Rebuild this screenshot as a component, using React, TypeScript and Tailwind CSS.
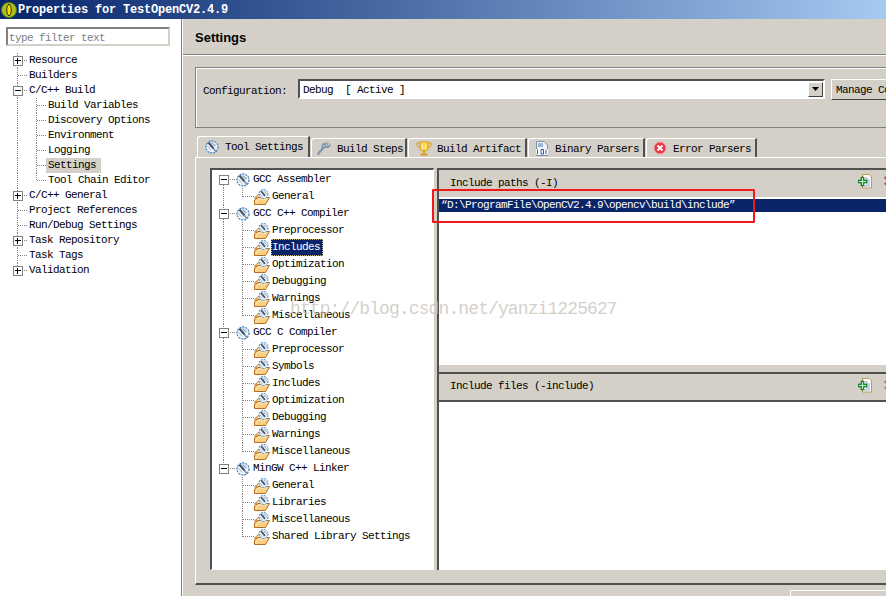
import React from "react";

const ToolIcon = ({ size = 14 }: { size?: number }) => (
  <svg width={size} height={size} viewBox="0 0 14 14" className="shrink-0">
    <circle cx="7" cy="7" r="6" fill="#f2f6fb" stroke="#3f86c4" strokeWidth="1.3" strokeDasharray="2 1" />
    <path d="M3.5 2.5 L8.5 8.5" stroke="#44566e" strokeWidth="2.2" />
    <path d="M8 8 L11 11.5" stroke="#7f8ba0" strokeWidth="1.6" />
    <path d="M6.5 2.5 L10.5 6" stroke="#8fa0b8" strokeWidth="1.2" />
    <path d="M2.5 6 L6 10.5" stroke="#a6b4c8" strokeWidth="1" />
  </svg>
);

const FolderIcon = () => (
  <svg width="16" height="16" viewBox="0 0 16 16" className="shrink-0">
    <path d="M.5 9 L4.5 5.5 L8 5.5 L8 9 Z" fill="#fde4ad" stroke="#b9772a" />
    <path d="M.5 15.5 L.5 11 L4 8.5 L15.5 8.5 L11.5 15.5 Z" fill="#fbcf80" stroke="#b36f22" />
    <path d="M1.5 14 L4.5 10 L13 10" fill="none" stroke="#fdeac2" />
    <circle cx="9.5" cy="5" r="4.5" fill="#f2f6fb" stroke="#3f86c4" strokeDasharray="2 1" />
    <path d="M7 2 L11 6.8" stroke="#44566e" strokeWidth="1.8" />
    <path d="M9.5 1.8 L12.8 4.8" stroke="#8fa0b8" />
    <path d="M6 5 L9 8.5" stroke="#a6b4c8" />
  </svg>
);

const Expander = ({ x, y, open }: { x: number; y: number; open: boolean }) => (
  <g shapeRendering="crispEdges">
    <rect x={x - 4.5} y={y - 4.5} width="9" height="9" fill="#fff" stroke="#808080" />
    <path d={`M${x - 2.5} ${y}H${x + 3}`} stroke="#000" />
    {!open && <path d={`M${x} ${y - 2.5}V${y + 3}`} stroke="#000" />}
  </g>
);

type SideRow = { t: string; lvl: 0 | 1; exp?: "open" | "closed"; last?: boolean; sel?: boolean };

const side: SideRow[] = [
  { t: "Resource", lvl: 0, exp: "closed" },
  { t: "Builders", lvl: 0 },
  { t: "C/C++ Build", lvl: 0, exp: "open" },
  { t: "Build Variables", lvl: 1 },
  { t: "Discovery Options", lvl: 1 },
  { t: "Environment", lvl: 1 },
  { t: "Logging", lvl: 1 },
  { t: "Settings", lvl: 1, sel: true },
  { t: "Tool Chain Editor", lvl: 1, last: true },
  { t: "C/C++ General", lvl: 0, exp: "closed" },
  { t: "Project References", lvl: 0 },
  { t: "Run/Debug Settings", lvl: 0 },
  { t: "Task Repository", lvl: 0, exp: "closed" },
  { t: "Task Tags", lvl: 0 },
  { t: "Validation", lvl: 0, exp: "closed", last: true },
];

const SideItem = ({ r }: { r: SideRow }) => {
  const w = r.lvl === 0 ? 28 : 46;
  return (
    <div className="flex h-[15px] items-center">
      <svg width={w} height="15" className="shrink-0">
        <g stroke="#808080" strokeDasharray="1 1" fill="none" shapeRendering="crispEdges">
          {r.lvl === 0 ? (
            <>
              <path d={`M17.5 0V${r.last ? 7.5 : 15}`} />
              <path d="M18 7.5H28" />
            </>
          ) : (
            <>
              <path d="M17.5 0V15" />
              <path d={`M36.5 0V${r.last ? 7.5 : 15}`} />
              <path d="M37 7.5H46" />
            </>
          )}
        </g>
        {r.exp && <Expander x={17.5} y={7.5} open={r.exp === "open"} />}
      </svg>
      <span
        className={`h-[15px] leading-[15px] whitespace-nowrap ${r.lvl === 0 ? "px-[1px]" : "px-[2px]"} ${
          r.sel ? "bg-[#d4d0c8] pr-[5px]" : ""
        }`}
      >
        {r.t}
      </span>
    </div>
  );
};

type ToolRow = { t: string; lvl: 0 | 1; last?: boolean; sel?: boolean };

const tools: ToolRow[] = [
  { t: "GCC Assembler", lvl: 0 },
  { t: "General", lvl: 1, last: true },
  { t: "GCC C++ Compiler", lvl: 0 },
  { t: "Preprocessor", lvl: 1 },
  { t: "Includes", lvl: 1, sel: true },
  { t: "Optimization", lvl: 1 },
  { t: "Debugging", lvl: 1 },
  { t: "Warnings", lvl: 1 },
  { t: "Miscellaneous", lvl: 1, last: true },
  { t: "GCC C Compiler", lvl: 0 },
  { t: "Preprocessor", lvl: 1 },
  { t: "Symbols", lvl: 1 },
  { t: "Includes", lvl: 1 },
  { t: "Optimization", lvl: 1 },
  { t: "Debugging", lvl: 1 },
  { t: "Warnings", lvl: 1 },
  { t: "Miscellaneous", lvl: 1, last: true },
  { t: "MinGW C++ Linker", lvl: 0 },
  { t: "General", lvl: 1 },
  { t: "Libraries", lvl: 1 },
  { t: "Miscellaneous", lvl: 1 },
  { t: "Shared Library Settings", lvl: 1, last: true },
];

const ToolItem = ({ r, idx }: { r: ToolRow; idx: number }) => {
  const isLastGroup = idx >= 17;
  if (r.lvl === 0) {
    return (
      <div className="flex h-[17px] items-center">
        <svg width="24" height="17" className="shrink-0">
          <g stroke="#808080" strokeDasharray="1 1" fill="none" shapeRendering="crispEdges">
            <path d={`M11.5 ${idx === 0 ? 8 : 0}V${isLastGroup ? 8 : 17}`} />
            <path d="M12 8.5H24" />
          </g>
          <Expander x={11.5} y={8.5} open />
        </svg>
        <ToolIcon />
        <span className="ml-[3px] leading-[17px] whitespace-nowrap">{r.t}</span>
      </div>
    );
  }
  return (
    <div className="flex h-[17px] items-center">
      <svg width="42" height="17" className="shrink-0">
        <g stroke="#808080" strokeDasharray="1 1" fill="none" shapeRendering="crispEdges">
          {!isLastGroup && <path d="M11.5 0V17" />}
          <path d={`M30.5 0V${r.last ? 8.5 : 17}`} />
          <path d="M31 8.5H42" />
        </g>
      </svg>
      <FolderIcon />
      <span
        className={`ml-[1px] h-[17px] px-[1px] pr-[3px] leading-[17px] whitespace-nowrap ${
          r.sel ? "bg-[#0a246a] text-white outline-1 -outline-offset-1 outline-dotted outline-[#c8b878]" : ""
        }`}
      >
        {r.t}
      </span>
    </div>
  );
};

const TabIcon = ({ k }: { k: string }) => {
  if (k === "tool") return <ToolIcon />;
  if (k === "steps")
    return (
      <svg width="16" height="15" viewBox="0 0 16 15" className="shrink-0">
        <path d="M1 14 L2 11 L5 8 L6 3 L10 1 L15 4 L13 7 L9 7 L5 11 L3 14 Z" fill="#7f98b0" />
        <path d="M10 2l1 3M13 3l-1 2M7 4l2 2" stroke="#d4d0c8" />
      </svg>
    );
  if (k === "art")
    return (
      <svg width="16" height="15" viewBox="0 0 16 15" className="shrink-0">
        <path d="M4 1H12V7Q12 10 8 10Q4 10 4 7Z" fill="#fbd34d" stroke="#e09a12" />
        <path d="M4 2H1V4Q1 6 4 7M12 2H15V4Q15 6 12 7" fill="none" stroke="#e09a12" />
        <path d="M6.5 2V8M9.5 2V8" stroke="#fff3b8" />
        <path d="M8 10V12M4.5 13.5H11.5" stroke="#e09a12" strokeWidth="2" />
      </svg>
    );
  if (k === "bin")
    return (
      <svg width="14" height="15" viewBox="0 0 14 15" className="shrink-0">
        <path d="M1.5 .5H9L12.5 4V14.5H1.5Z" fill="#eef3fa" stroke="#7d8ea8" />
        <path d="M3 3H8M3 5H8" stroke="#4a76b8" />
        <rect x="1" y="8" width="12" height="5.5" fill="#fff" />
        <path d="M2.5 8.5V13M6 8.5V13M6 8.5H8.5V13H6M11 8.5V13" stroke="#2a5ca8" fill="none" />
      </svg>
    );
  return (
    <svg width="14" height="14" viewBox="0 0 14 14" className="shrink-0">
      <circle cx="7" cy="7" r="6" fill="#e8394a" stroke="#f19aa2" />
      <path d="M4.5 4.5L9.5 9.5M9.5 4.5L4.5 9.5" stroke="#fff" strokeWidth="1.8" />
    </svg>
  );
};

const Tab = ({ k, t, cls, active }: { k: string; t: string; cls: string; active?: boolean }) => (
  <div
    className={`flex items-center border-t border-l border-r-2 border-t-white border-l-white border-r-[#505050] rounded-tl-[3px] ${cls} ${
      active ? "h-[21px]" : "h-[19px]"
    }`}
  >
    <TabIcon k={k} />
    <span className={`whitespace-nowrap ${active ? "" : "pt-[2px]"}`}>{t}</span>
  </div>
);

const AddIcon = () => (
  <svg width="15" height="15" viewBox="0 0 15 15" className="shrink-0">
    <path d="M4.5 .5H11L13.5 3V14H4.5Z" fill="#fff" stroke="#bb9a50" />
    <path d="M7 4H10M7 6H12M8 8H12M8 10H12M6 12H12" stroke="#8fa8cc" />
    <path d="M0 6H3V3H6V6H9V9H6V12H3V9H0Z" fill="#1f9a3c" stroke="#0f6a2a" strokeWidth=".6" />
    <path d="M1 7.5H8M4.5 4V11" stroke="#bfeec8" />
  </svg>
);

const DelIcon = ({ color }: { color: string }) => (
  <svg width="15" height="15" viewBox="0 0 15 15" className="shrink-0">
    <path d="M3 3L11 11M11 3L3 11" stroke={color} strokeWidth="3" strokeDasharray="2 1" />
  </svg>
);

const PathsHeader = ({ t, on, textCls }: { t: string; on?: boolean; textCls?: string }) => (
  <div className="flex h-[28px] items-center justify-between border-t-2 border-[#505050] pl-[11px]">
    <span className={`whitespace-nowrap ${textCls ?? ""}`}>{t}</span>
    <div className="flex items-center gap-[9px] pb-[4px]">
      <AddIcon />
      <DelIcon color={on ? "#d6293a" : "#808080"} />
    </div>
  </div>
);

export default function App() {
  return (
    <div
      className="relative flex h-[596px] w-[886px] flex-col overflow-hidden bg-[#d4d0c8] text-[11px] tracking-[-0.6px] text-black"
      style={{ fontFamily: '"Liberation Mono", monospace' }}
    >
      <div className="flex h-[19px] shrink-0 items-center bg-gradient-to-r from-[#0a246a] to-[#a6caf0] pl-[1px]">
        <svg width="16" height="16" viewBox="0 0 16 16" className="shrink-0">
          <circle cx="8" cy="8" r="7.5" fill="#a8c020" stroke="#5e7a10" />
          <path d="M8 2C5 4 5 12 8 14C11 12 11 4 8 2Z" fill="#ffd900" stroke="#2a2a10" />
        </svg>
        <span className="ml-[1px] text-[12px] font-bold tracking-[-0.2px] whitespace-nowrap text-white">
          Properties for TestOpenCV2.4.9
        </span>
      </div>

      <div className="flex min-h-0 flex-1">
        <aside className="flex w-[181px] shrink-0 flex-col bg-white pt-[8px]">
          <div className="mr-[11px] ml-[6px] flex h-[19px] items-center border-2 border-r-[#d4d0c8] border-b-[#d4d0c8] border-l-[#808080] border-t-[#808080] pl-[1px] pt-[3px] text-[#808080]">
            type filter text
          </div>
          <div className="mt-[7px]">
            {side.map((r) => (
              <SideItem key={r.t} r={r} />
            ))}
          </div>
        </aside>
        <div className="w-[2px] shrink-0 border-r border-white bg-[#808080]" />

        <main className="flex min-w-0 flex-1 flex-col">
          <div
            className="flex h-[36px] shrink-0 items-center border-b border-b-[#808080] pl-[12px] pt-[3px] text-[13px] font-bold tracking-normal shadow-[0_1px_0_#fff]"
            style={{ fontFamily: '"Liberation Sans", sans-serif' }}
          >
            Settings
          </div>

          <div className="ml-[12px] mt-[12px] flex h-[61px] w-[720px] shrink-0 items-start border border-[#808080] pl-[7px] pt-[11px] shadow-[inset_1px_1px_0_#fff]">
            <span className="mt-[4px] w-[95px] shrink-0 whitespace-nowrap">Configuration:</span>
            <div className="flex h-[20px] w-[527px] shrink-0 items-center justify-between border-2 border-t-[#505050] border-l-[#505050] border-r-white border-b-white bg-white pl-[3px]">
              <span className="whitespace-pre pt-[3px]">Debug  [ Active ]</span>
              <div className="flex h-[15px] w-[15px] items-center justify-center border border-t-white border-l-white border-r-[#404040] border-b-[#404040] bg-[#d4d0c8]">
                <svg width="7" height="4"><path d="M0 0H7L3.5 4Z" fill="#000" /></svg>
              </div>
            </div>
            <div className="ml-[6px] flex h-[21px] w-[100px] shrink-0 items-center border border-t-white border-l-white border-r-[#404040] border-b-[#404040] pl-[4px] pt-[1px] whitespace-nowrap">
              Manage Configurations...
            </div>
          </div>

          <div className="ml-[14px] mt-[8px] flex shrink-0 items-end gap-[1px]">
            <Tab k="tool" t="Tool Settings" cls="w-[113px] gap-[6px] pl-[7px]" active />
            <Tab k="steps" t="Build Steps" cls="w-[96px] gap-[5px] pl-[4px]" />
            <Tab k="art" t="Build Artifact" cls="w-[119px] gap-[5px] pl-[7px]" />
            <Tab k="bin" t="Binary Parsers" cls="w-[117px] gap-[6px] pl-[6px]" />
            <Tab k="err" t="Error Parsers" cls="w-[111px] gap-[6px] pl-[6px]" />
          </div>

          <div className="ml-[12px] flex h-[428px] w-[720px] shrink-0 border-t border-l border-b-2 border-t-white border-l-white border-b-[#505050] pt-[10px] pl-[14px]">
            <div className="h-[402px] w-[224px] shrink-0 border-t-2 border-l-2 border-b border-r border-t-[#505050] border-l-[#505050] border-b-white border-r-white bg-white">
              <div className="pt-[1px]">
                {tools.map((r, i) => (
                  <ToolItem key={i} r={r} idx={i} />
                ))}
              </div>
            </div>
            <div className="ml-[3px] flex h-[402px] w-[460px] shrink-0 flex-col border-l-2 border-[#505050]">
              <PathsHeader t="Include paths (-I)" on />
              <div className="h-[169px] shrink-0 border-t border-b border-t-[#d4d0c8] border-b-white bg-white pt-[2px]">
                <div className="flex h-[13px] items-center bg-[#0a246a] pl-[2px] whitespace-nowrap text-white">
                  “D:\ProgramFile\OpenCV2.4.9\opencv\build\include”
                </div>
              </div>
              <div className="h-[7px] shrink-0" />
              <PathsHeader t="Include files (-include)" textCls="pb-[2px]" />
              <div className="min-h-0 flex-1 border-t-2 border-[#505050] bg-white" />
            </div>
          </div>

          <div className="min-h-0 flex-1">
            <div className="ml-[607px] mt-[5px] h-[10px] w-[120px] border-t border-l border-t-white border-l-white" />
          </div>
        </main>
      </div>

      <div className="pointer-events-none absolute top-[189px] left-[432px] h-[34px] w-[323px] rounded-[1px] border-2 border-[#f01818]" />
      <div className="pointer-events-none absolute top-[299px] left-[290px] text-[18px] leading-[20px] tracking-[-0.9px] whitespace-nowrap text-[#c8c4bc]/80">
        http://blog.csdn.net/yanzi1225627
      </div>
    </div>
  );
}
